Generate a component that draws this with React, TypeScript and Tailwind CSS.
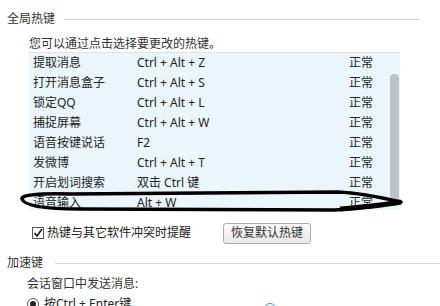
import React from "react";

const rows: [string, string][] = [
  ["提取消息", "Ctrl + Alt + Z"],
  ["打开消息盒子", "Ctrl + Alt + S"],
  ["锁定QQ", "Ctrl + Alt + L"],
  ["捕捉屏幕", "Ctrl + Alt + W"],
  ["语音按键说话", "F2"],
  ["发微博", "Ctrl + Alt + T"],
  ["开启划词搜索", "双击 Ctrl 键"],
  ["语音输入", "Alt + W"],
];

export default function App() {
  return (
    <div
      className="relative w-[440px] h-[306px] overflow-hidden bg-white text-[12px] text-[#222] leading-none"
      style={{ fontFamily: '"Noto Sans", "Noto Sans CJK SC", sans-serif' }}
    >
      {/* 全局热键 header */}
      <div className="flex items-center pl-[7px] pt-[12px] pr-[20px] h-[26px]">
        <span className="text-[#333]">全局热键</span>
        <div className="flex-1 h-px bg-[#d6d6d6] ml-[9px]" />
      </div>

      <div className="pl-[29px] mt-[12px] h-[14px] text-[#333]">您可以通过点击选择要更改的热键。</div>

      {/* list box */}
      <div className="ml-[29px] w-[371px] h-[158px] bg-[#eaf6fc] border-t border-[#d8e4ea] flex overflow-hidden">
        <div className="flex-1 flex flex-col">
          {rows.map(([name, key]) => (
            <div key={name} className="h-[20px] flex items-center shrink-0">
              <span className="w-[108px] pl-[4px]">{name}</span>
              <span className="w-[212px]">{key}</span>
              <span>正常</span>
            </div>
          ))}
        </div>
        <div className="w-[12px] flex flex-col items-center pt-[21px] pb-[10px]">
          <div className="w-[9px] flex-1 bg-[#bcc3c7] rounded-t-[4px]" />
        </div>
      </div>

      {/* checkbox + button */}
      <div className="flex items-center h-[24px] mt-[11px] pl-[32px]">
        <div className="w-[12px] h-[12px] border border-[#555] bg-white flex items-center justify-center">
          <svg width="10" height="10" viewBox="0 0 10 10">
            <path d="M1.5 5 L4 8 L9 1" fill="none" stroke="#111" strokeWidth="1.6" />
          </svg>
        </div>
        <span className="ml-[3px] w-[176px]">热键与其它软件冲突时提醒</span>
        <button className="h-[21px] w-[88px] border border-[#adadad] rounded-[3px] bg-gradient-to-b from-[#fafafa] to-[#e8e8e8] text-[#333] text-[12px] flex items-center justify-center">
          恢复默认热键
        </button>
      </div>

      {/* 加速键 header */}
      <div className="flex items-center pl-[7px] mt-[11px] h-[14px]">
        <span className="text-[#333]">加速键</span>
        <div className="flex-1 h-px bg-[#d6d6d6] ml-[12px]" />
      </div>

      <div className="pl-[27px] mt-[8px] h-[14px] text-[#333]">会话窗口中发送消息:</div>

      <div className="flex items-start pl-[27px] mt-[6px] h-[14px]">
        <div className="w-[12px] h-[12px] rounded-full border border-[#555] bg-white flex items-center justify-center">
          <div className="w-[6px] h-[6px] rounded-full bg-[#222]" />
        </div>
        <span className="ml-[5px] w-[220px] leading-[12px]">按Ctrl + Enter键</span>
        <div className="mt-[5px] w-[12px] h-[12px] rounded-full border border-[#3a8fc8] bg-white" />
      </div>

      {/* hand-drawn oval annotation */}
      <svg className="absolute left-0 top-0 pointer-events-none" width="440" height="306" viewBox="0 0 440 306">
        <path
          d="M70 194 C40 193 20 195 22 199 C24 205 40 209 80 209 L335 210 C360 208 385 205 401 202 C388 199 362 193 338 192 L70 194"
          fill="none"
          stroke="#000"
          strokeWidth="3.5"
          strokeLinejoin="round"
        />
        <path d="M340 209 C365 207 390 204 401 202" fill="none" stroke="#000" strokeWidth="5" />
      </svg>
    </div>
  );
}
